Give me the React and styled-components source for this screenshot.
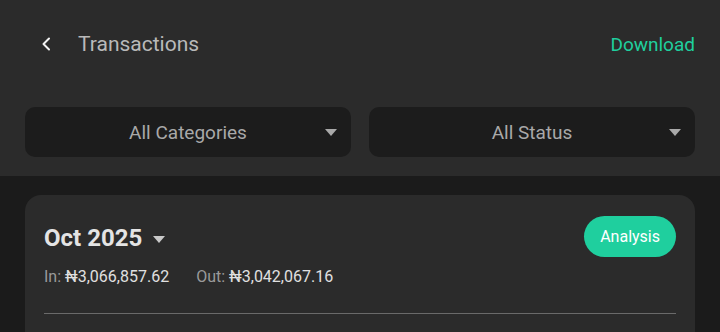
import styled, { createGlobalStyle } from "styled-components";

const GlobalStyle = createGlobalStyle`
  body {
    margin: 0;
    background: #1b1b1b;
    font-family: Roboto, "Liberation Sans", sans-serif;
  }
`;

const Page = styled.div`
  width: 720px;
  height: 332px;
  overflow: hidden;
  background: #1b1b1b;
`;

const Header = styled.div`
  background: #2b2b2b;
  padding: 0 25px 19px;
`;

const TopBar = styled.div`
  height: 88px;
  margin-bottom: 19px;
  display: flex;
  align-items: center;
  justify-content: space-between;
`;

const TitleGroup = styled.div`
  display: flex;
  align-items: center;
  gap: 25px;
  padding-left: 16px;
`;

const Title = styled.span`
  font-size: 21px;
  color: #b9b9b9;
`;

const Download = styled.span`
  font-size: 19px;
  color: #1fcf9e;
`;

const Filters = styled.div`
  display: grid;
  grid-template-columns: 1fr 1fr;
  gap: 18px;
`;

const Select = styled.div`
  height: 50px;
  border-radius: 10px;
  background: #1c1c1c;
  display: flex;
  align-items: center;
  justify-content: center;
  position: relative;
  font-size: 19px;
  color: #a9a9a9;
`;

const Caret = styled.span`
  position: absolute;
  right: 14px;
  top: 50%;
  margin-top: -3px;
  width: 0;
  height: 0;
  border-left: 6px solid transparent;
  border-right: 6px solid transparent;
  border-top: 7px solid #a9a9a9;
`;

const Card = styled.div`
  margin: 19px 25px 0;
  background: #2b2b2b;
  border-radius: 16px;
  padding: 21px 19px 0;
  height: 200px;
`;

const CardTop = styled.div`
  display: flex;
  align-items: center;
  justify-content: space-between;
`;

const Month = styled.div`
  display: flex;
  align-items: center;
  gap: 11px;
  font-size: 24px;
  font-weight: 700;
  color: #e4e4e4;
  padding-top: 3px;
`;

const SmallCaret = styled.span`
  width: 0;
  height: 0;
  border-left: 6px solid transparent;
  border-right: 6px solid transparent;
  border-top: 7px solid #c9c9c9;
  margin-top: 2px;
`;

const AnalysisButton = styled.button`
  height: 41px;
  padding: 0 16px;
  border: none;
  border-radius: 21px;
  background: #1fcf9e;
  color: #ffffff;
  font-family: Roboto, "Liberation Sans", sans-serif;
  font-size: 16px;
`;

const Totals = styled.div`
  display: flex;
  gap: 27px;
  margin-top: 10px;
  font-size: 16px;
`;

const Label = styled.span`
  color: #9a9a9a;
`;

const Amount = styled.span`
  color: #e0e0e0;
`;

const Divider = styled.div`
  height: 1px;
  background: #6a6a6a;
  margin-top: 27px;
`;

export default function App() {
  return (
    <Page>
      <GlobalStyle />
      <Header>
        <TopBar>
          <TitleGroup>
            <svg width="12" height="14" viewBox="0 0 12 14">
              <path
                d="M8 1.5 L2.5 7 L8 12.5"
                fill="none"
                stroke="#f2f2f2"
                strokeWidth="2"
                strokeLinecap="round"
                strokeLinejoin="round"
              />
            </svg>
            <Title>Transactions</Title>
          </TitleGroup>
          <Download>Download</Download>
        </TopBar>
        <Filters>
          <Select>
            All Categories
            <Caret />
          </Select>
          <Select>
            All Status
            <Caret />
          </Select>
        </Filters>
      </Header>
      <Card>
        <CardTop>
          <Month>
            Oct 2025
            <SmallCaret />
          </Month>
          <AnalysisButton>Analysis</AnalysisButton>
        </CardTop>
        <Totals>
          <span>
            <Label>In: </Label>
            <Amount>₦3,066,857.62</Amount>
          </span>
          <span>
            <Label>Out: </Label>
            <Amount>₦3,042,067.16</Amount>
          </span>
        </Totals>
        <Divider />
      </Card>
    </Page>
  );
}
